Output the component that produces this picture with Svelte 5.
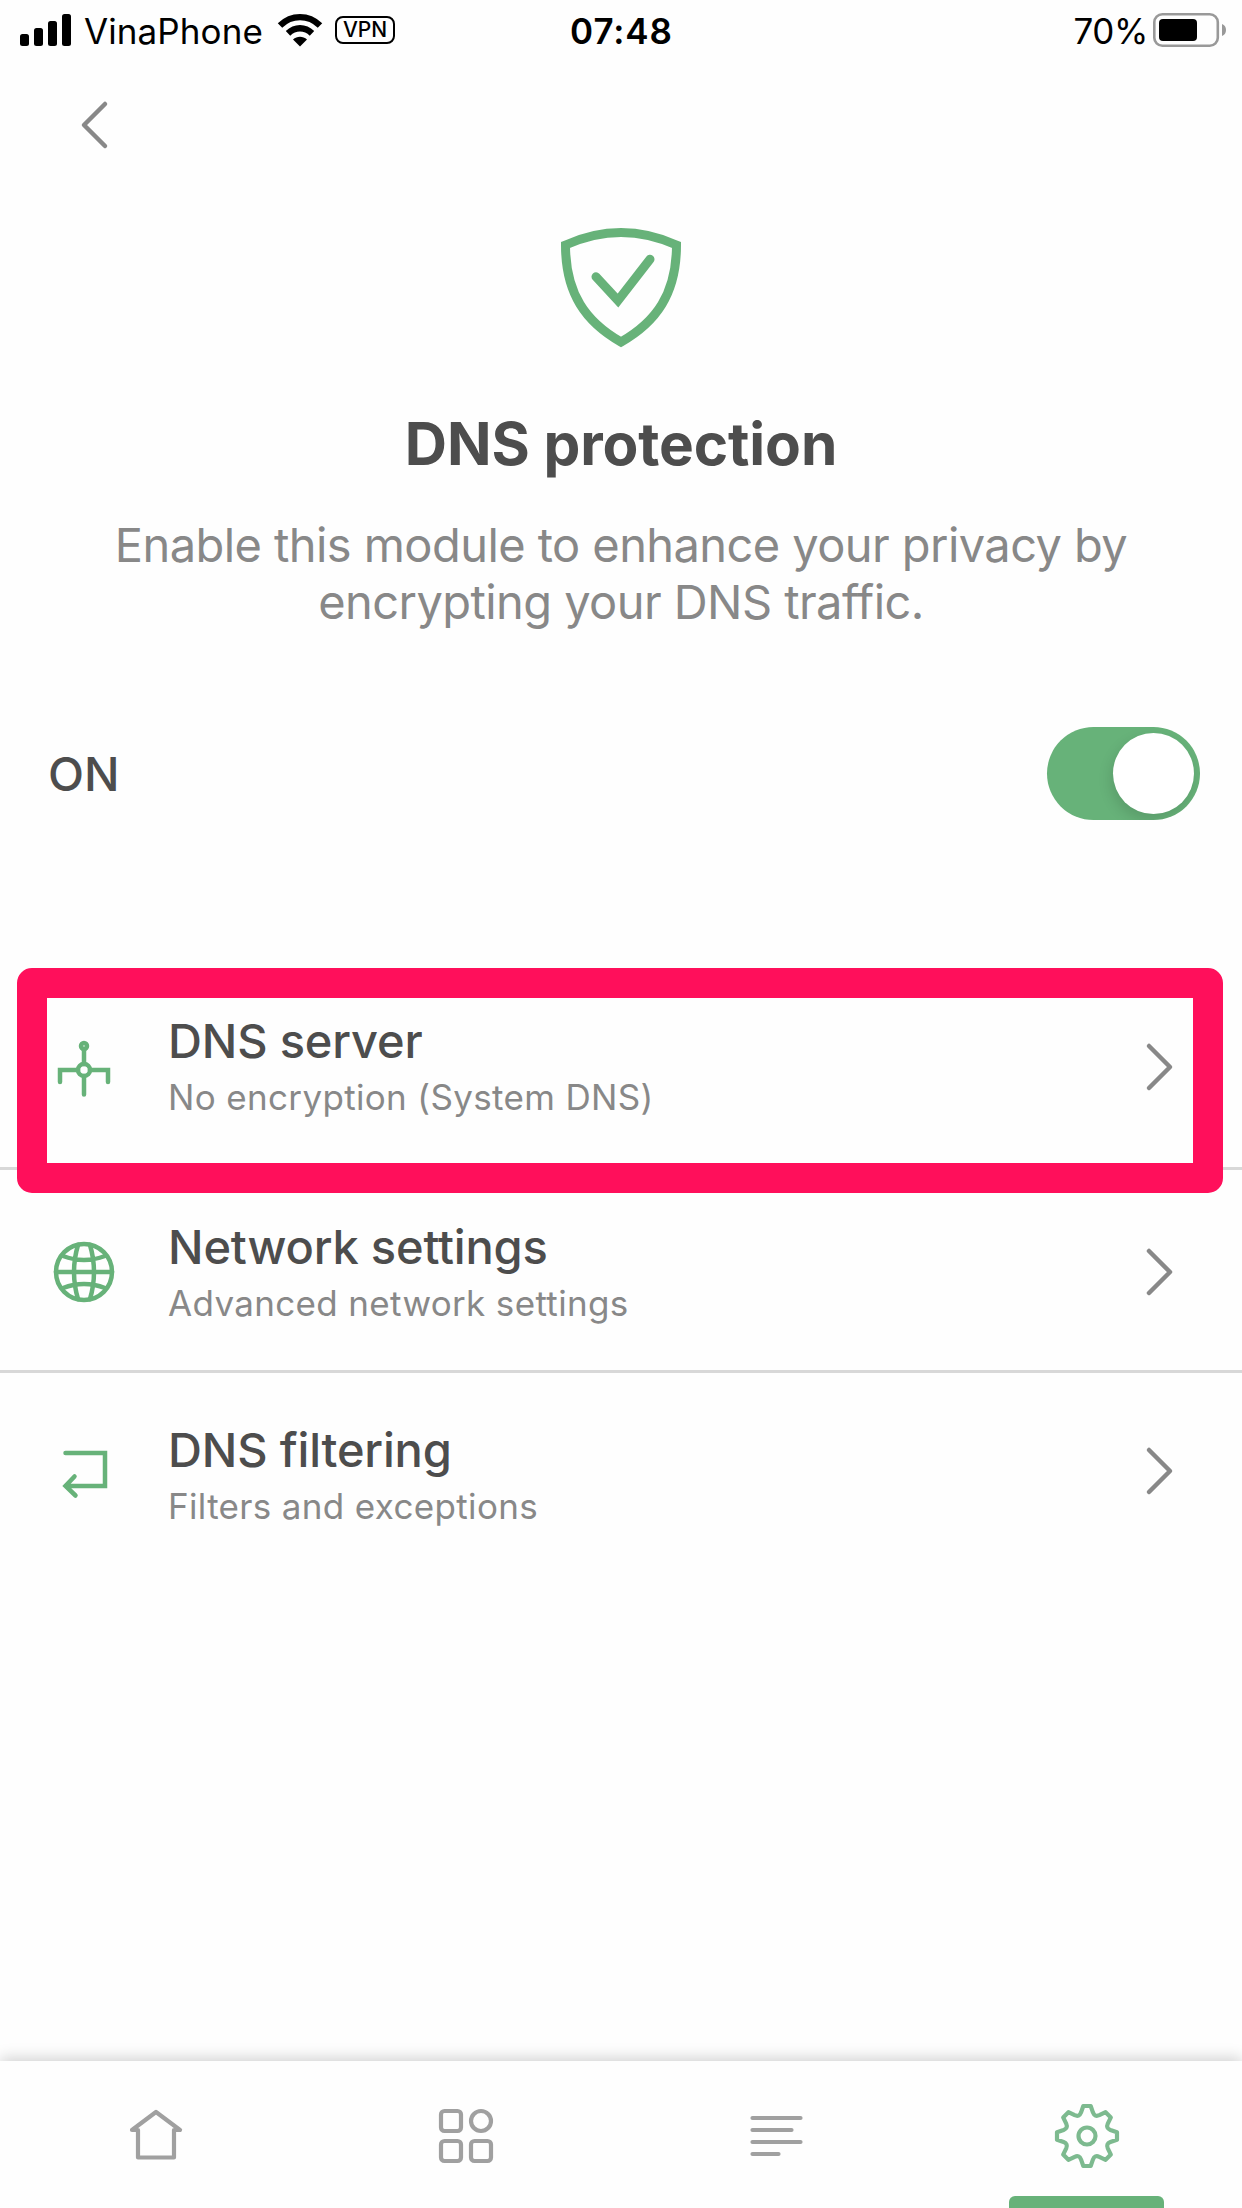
<script>
  const rows = [
    { icon: 'server', title: 'DNS server', note: 'No encryption (System DNS)' },
    { icon: 'globe', title: 'Network settings', note: 'Advanced network settings' },
    { icon: 'filter', title: 'DNS filtering', note: 'Filters and exceptions' }
  ];

  // Eight-tooth gear outline: each tooth is drawn upright, then turned by 45 degrees.
  function gearPath() {
    const at = (x, y, turn) => {
      const a = (turn * Math.PI) / 4;
      return `${(x * Math.cos(a) - y * Math.sin(a)).toFixed(2)} ${(x * Math.sin(a) + y * Math.cos(a)).toFixed(2)}`;
    };
    let d = '';
    for (let k = 0; k < 8; k++) {
      d += `${k ? 'L' : 'M'}${at(-3.7, -30, k)}L${at(3.7, -30, k)}L${at(6, -23.4, k)}`;
      d += `Q${at(0, -20.3, k + 0.5)} ${at(-6, -23.4, k + 1)}`;
    }
    return d + 'Z';
  }
  const gear = gearPath();
</script>

<main class="screen">
  <div class="status">
    <div class="left">
      <svg class="signal" viewBox="0 0 52 34">
        <rect x="0" y="21" width="9" height="12" rx="2.5" />
        <rect x="14" y="15" width="9" height="18" rx="2.5" />
        <rect x="28" y="8" width="9" height="25" rx="2.5" />
        <rect x="42" y="1" width="9" height="32" rx="2.5" />
      </svg>
      <span class="carrier">VinaPhone</span>
      <svg class="wifi" viewBox="0 0 46 34">
        <path d="M3 12.5C14.5 1.3 31.5 1.3 43 12.5M11 20.4C18 13.6 28 13.6 35 20.4" fill="none" stroke="#000" stroke-width="6.4" />
        <path d="M23 33.5L16 26.6C20 22.9 26 22.9 30 26.6Z" />
      </svg>
      <span class="vpn">VPN</span>
    </div>
    <span class="time">07:48</span>
    <div class="right">
      <span class="percent">70%</span>
      <svg class="battery" viewBox="0 0 74 34">
        <rect x="1.3" y="1.3" width="63.5" height="31.4" rx="8" fill="none" stroke="#999" stroke-width="2.6" />
        <rect x="6" y="6" width="38" height="22" rx="4" />
        <path d="M69 11Q73 12.5 73 17T69 23Z" fill="#999" />
      </svg>
    </div>
  </div>

  <header>
    <svg class="back" viewBox="0 0 30 50"><path d="M25 4L4 25L25 46" /></svg>
  </header>

  <section class="hero">
    <svg class="shield" viewBox="0 0 120 120">
      <path d="M4.5 17Q60 -8 115.5 17C115.5 66 95 94 60 114C25 94 4.5 66 4.5 17Z" stroke-width="9" />
      <path d="M35 48.7L57 72.5L89 31.3" stroke-width="9" stroke-linecap="round" />
    </svg>
    <h1>DNS protection</h1>
    <p>Enable this module to enhance your privacy by<br />encrypting your DNS traffic.</p>
  </section>

  <div class="switch-row">
    <span>ON</span>
    <div class="toggle"><div class="knob"></div></div>
  </div>

  <div class="list">
    {#each rows as row}
      <div class="row {row.icon}">
        <svg class="icon" viewBox="-32 -32 64 64">
          {#if row.icon === 'server'}
            <circle cx="0" cy="-24" r="3" />
            <circle cx="0" cy="0" r="6" />
            <path d="M0 -21V-6M0 6V24.5M-6 0H-24V12M6 0H24V12" />
          {:else if row.icon === 'globe'}
            <circle cx="0" cy="0" r="28" />
            <path d="M-28 0H28M-21 -16Q0 -8 21 -16M-21 16Q0 8 21 16M-6 -27Q-14 0 -6 27M6 -27Q14 0 6 27" />
          {:else}
            <path d="M-18.5 -19H21V14H-18M-9.5 4.5L-18.5 14L-8.5 23.5" />
          {/if}
        </svg>
        <div class="words">
          <span class="title">{row.title}</span>
          <span class="note">{row.note}</span>
        </div>
        <svg class="chevron" viewBox="0 0 30 50"><path d="M4 4L25 25L4 46" /></svg>
      </div>
    {/each}
    <div class="highlight"></div>
  </div>

  <nav>
    <div class="tab">
      <svg viewBox="-32 -32 64 64"><path d="M1 -24L25 -6H19V21.5H-17V-6H-23Z" /></svg>
    </div>
    <div class="tab">
      <svg viewBox="-32 -32 64 64">
        <rect x="-25" y="-25" width="20" height="20" rx="3.5" />
        <circle cx="15" cy="-15" r="10" />
        <rect x="-25" y="5" width="20" height="20" rx="3.5" />
        <rect x="5" y="5" width="20" height="20" rx="3.5" />
      </svg>
    </div>
    <div class="tab">
      <svg viewBox="-32 -32 64 64"><path d="M-23.5 -18H24.5M-23.5 -6H15.5M-23.5 6H24.5M-23.5 18H2.5" /></svg>
    </div>
    <div class="tab active">
      <svg viewBox="-32 -32 64 64"><path d={gear} /><circle cx="0" cy="0" r="8.5" /></svg>
    </div>
  </nav>
</main>

<style>
  :global(body) { background: #fefefe; }
  .screen {
    width: 1242px;
    height: 2208px;
    display: flex;
    flex-direction: column;
    overflow: hidden;
    background: #fefefe;
    color: #4d4d4d;
    font-family: Inter, Roboto, sans-serif;
  }
  svg { display: block; flex: none; overflow: visible; }

  .status {
    height: 60px;
    flex: none;
    display: grid;
    grid-template-columns: 1fr auto 1fr;
    padding: 0 15px 0 20px;
    color: #000;
    font-size: 35px;
    line-height: 62px;
  }
  .left, .right { display: flex; align-items: flex-start; }
  .right { justify-content: flex-end; }
  .signal { width: 52px; height: 34px; margin-top: 13px; }
  .carrier { margin-left: 12px; width: 180px; white-space: nowrap; letter-spacing: 0.1px; }
  .wifi { width: 46px; height: 34px; margin: 13px 0 0 13px; }
  .vpn {
    box-sizing: border-box;
    width: 60px;
    height: 28px;
    margin: 16px 0 0 12px;
    border: 2.5px solid #000;
    border-radius: 8px;
    font-size: 21px;
    font-weight: 500;
    line-height: 24px;
    text-align: center;
  }
  .time { margin-right: 4px; font-weight: 600; letter-spacing: 0.9px; }
  .percent { letter-spacing: -0.4px; }
  .battery { width: 74px; height: 34px; margin: 13px 0 0 5px; }

  header { flex: none; height: 90px; padding: 40px 0 0 80px; box-sizing: border-box; }
  .back { width: 30px; height: 50px; fill: none; stroke: #888; stroke-width: 4.5; stroke-linecap: round; stroke-linejoin: round; }

  .hero { flex: none; height: 550px; padding-top: 78px; box-sizing: border-box; text-align: center; }
  .shield { width: 120px; height: 120px; margin: 0 auto; fill: none; stroke: #67b279; }
  h1 { margin: 60px 0 0; font-size: 58.5px; line-height: 72px; font-weight: 700; letter-spacing: -0.1px; }
  p { margin: 36px 0 0; color: #888; font-size: 47px; line-height: 57px; letter-spacing: -0.57px; }

  .switch-row {
    flex: none;
    height: 264px;
    padding: 27px 42px 0 48px;
    box-sizing: border-box;
    display: flex;
    justify-content: space-between;
    font-size: 47px;
    font-weight: 500;
    line-height: 94px;
  }
  .toggle { box-sizing: border-box; width: 153px; height: 93px; padding: 6px; border-radius: 47px; background: #67b279; display: flex; justify-content: flex-end; overflow: hidden; }
  .knob { width: 81px; height: 81px; border-radius: 50%; background: #fff; box-shadow: -2px 6px 14px rgba(0, 0, 0, 0.13); }

  .list { flex: none; position: relative; }
  .row { height: 200px; display: flex; align-items: flex-start; padding: 0 67px 0 52px; border-bottom: 3px solid #d8d8d8; }
  .row.server { height: 203px; }
  .row.filter { border-bottom: 0; }
  .icon { width: 64px; height: 64px; margin-top: 70px; fill: none; stroke: #67b279; stroke-width: 4.5; stroke-linecap: round; }
  .server .icon { margin-top: 74px; }
  .filter .icon { margin-top: 67px; }
  .words { flex: 1; display: flex; flex-direction: column; gap: 4px; padding: 48px 0 0 52px; }
  .title { font-size: 47px; line-height: 57px; font-weight: 500; letter-spacing: -0.17px; }
  .note { color: #888; font-size: 35px; line-height: 48px; letter-spacing: 0.34px; }
  .chevron { width: 30px; height: 50px; margin-top: 77px; fill: none; stroke: #888; stroke-width: 4.5; stroke-linecap: round; stroke-linejoin: round; }
  .server .chevron { margin-top: 78px; }
  .filter .chevron { margin-top: 73px; }
  .highlight { position: absolute; top: 4px; left: 17px; width: 1206px; height: 225px; box-sizing: border-box; border: 30px solid #ff0f5b; border-radius: 15px; }

  nav { margin-top: auto; height: 147px; flex: none; display: grid; grid-template-columns: repeat(4, 1fr); background: #fefefe; box-shadow: 0 -3px 14px rgba(0, 0, 0, 0.18); }
  .tab { display: flex; flex-direction: column; align-items: center; justify-content: space-between; padding-top: 43px; }
  .tab svg { width: 64px; height: 64px; fill: none; stroke: #a0a0a0; stroke-width: 4.2; stroke-linecap: round; stroke-linejoin: round; }
  .tab.active svg { stroke: #7dba8f; }
  .tab.active::after { content: ''; width: 155px; height: 12px; border-radius: 6px 6px 0 0; background: #67b279; }
</style>
